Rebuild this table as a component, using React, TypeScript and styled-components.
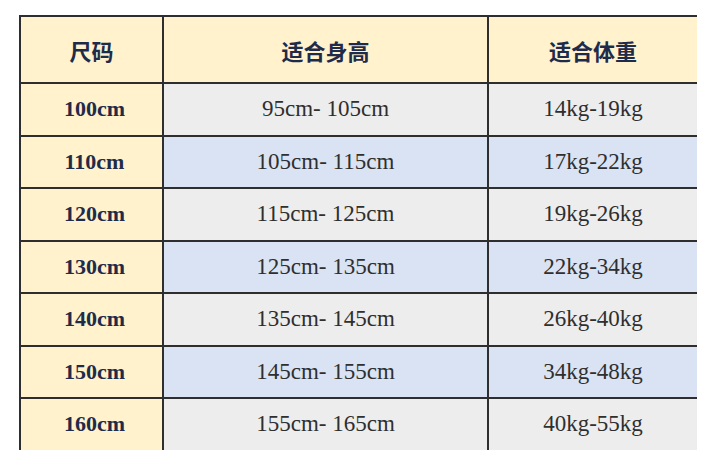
import styled, { createGlobalStyle } from "styled-components";

const GlobalStyle = createGlobalStyle`
    html, body {
        margin: 0;
        padding: 0;
        background: #ffffff;
    }
`;

const Page = styled.div`
    width: 703px;
    height: 453px;
    box-sizing: border-box;
    padding: 15px 7px 0 19px;
    background: #ffffff;
`;

const Table = styled.table`
    width: 677px;
    border-collapse: collapse;
    table-layout: fixed;
    border-top: 2px solid #2e2e2e;
    border-left: 2px solid #2e2e2e;
`;

const HeadCell = styled.th`
    height: 65px;
    padding: 0;
    background: #fff2cc;
    color: #1f2b4a;
    font-family: "Noto Sans CJK SC", "Liberation Serif", sans-serif;
    font-weight: 700;
    font-size: 22px;
    text-align: center;
    border-right: 2px solid #2e2e2e;
    border-bottom: 2px solid #2e2e2e;

    &:last-child {
        border-right: none;
    }
`;

const SizeCell = styled.td`
    height: 50.5px;
    padding: 0 0 0 6px;
    background: #fff2cc;
    color: #1f2b4a;
    font-family: "Liberation Serif", serif;
    font-weight: 700;
    font-size: 22px;
    text-align: center;
    border-right: 2px solid #2e2e2e;
    border-bottom: 2px solid #2e2e2e;
`;

const DataCell = styled.td<{ $alt: boolean }>`
    height: 50.5px;
    padding: 0;
    background: ${(p) => (p.$alt ? "#dae3f3" : "#ededed")};
    color: #2f2f2f;
    font-family: "Liberation Serif", serif;
    font-size: 23px;
    text-align: center;
    border-right: 2px solid #2e2e2e;
    border-bottom: 2px solid #2e2e2e;

    &:last-child {
        border-right: none;
    }
`;

const BodyRow = styled.tr`
    &:last-child td {
        border-bottom: none;
    }
`;

const rows = [
    { size: "100cm", height: "95cm- 105cm", weight: "14kg-19kg" },
    { size: "110cm", height: "105cm- 115cm", weight: "17kg-22kg" },
    { size: "120cm", height: "115cm- 125cm", weight: "19kg-26kg" },
    { size: "130cm", height: "125cm- 135cm", weight: "22kg-34kg" },
    { size: "140cm", height: "135cm- 145cm", weight: "26kg-40kg" },
    { size: "150cm", height: "145cm- 155cm", weight: "34kg-48kg" },
    { size: "160cm", height: "155cm- 165cm", weight: "40kg-55kg" },
];

export default function App() {
    return (
        <Page>
            <GlobalStyle />
            <Table>
                <colgroup>
                    <col style={{ width: 143 }} />
                    <col style={{ width: 325 }} />
                    <col style={{ width: 209 }} />
                </colgroup>
                <thead>
                    <tr>
                        <HeadCell>尺码</HeadCell>
                        <HeadCell>适合身高</HeadCell>
                        <HeadCell>适合体重</HeadCell>
                    </tr>
                </thead>
                <tbody>
                    {rows.map((r, i) => (
                        <BodyRow key={r.size}>
                            <SizeCell>{r.size}</SizeCell>
                            <DataCell $alt={i % 2 === 1}>{r.height}</DataCell>
                            <DataCell $alt={i % 2 === 1}>{r.weight}</DataCell>
                        </BodyRow>
                    ))}
                </tbody>
            </Table>
        </Page>
    );
}
